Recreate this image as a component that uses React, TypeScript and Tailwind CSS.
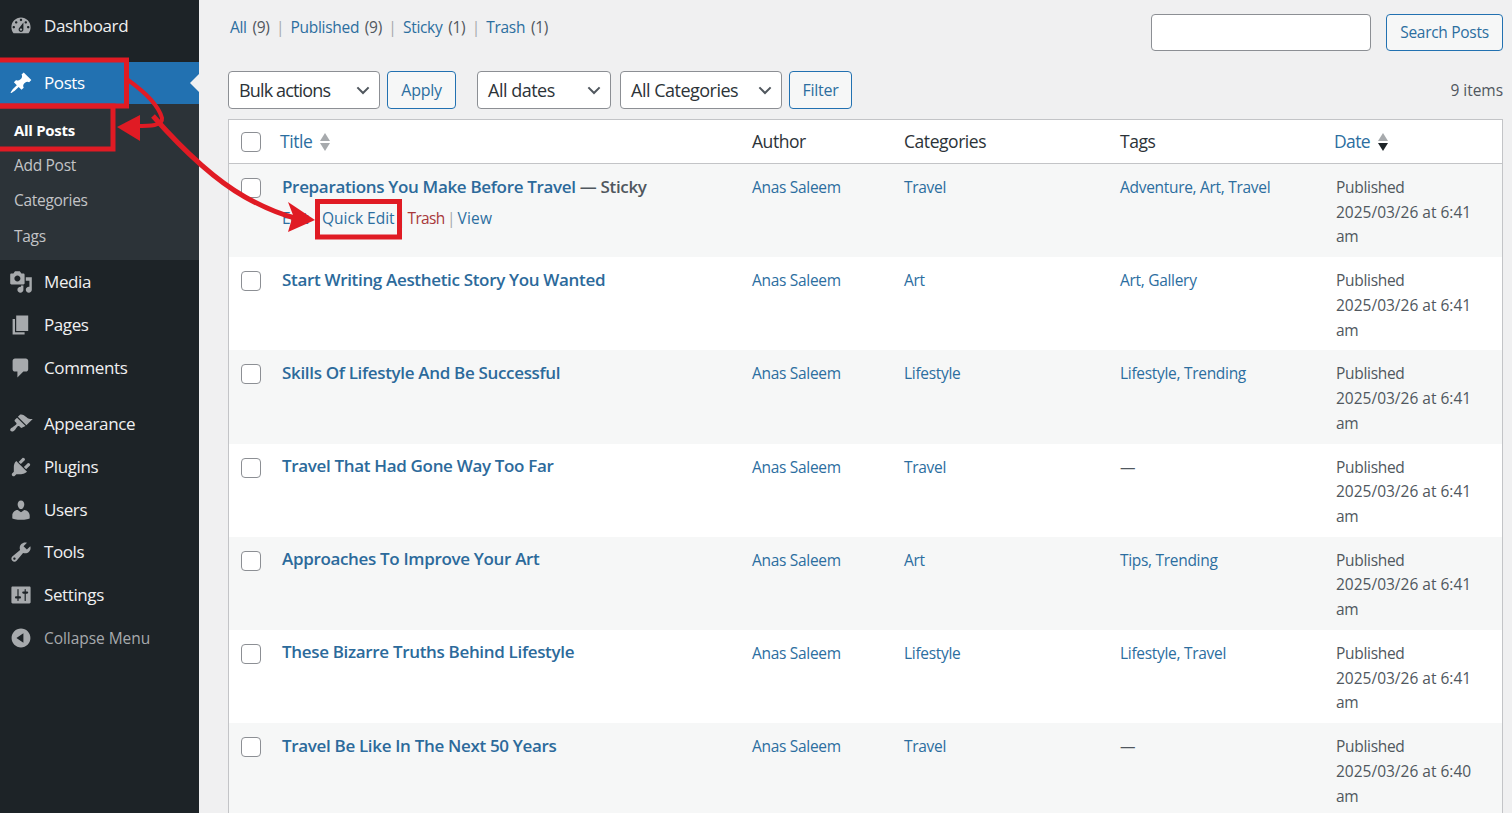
const font = "font-['Open_Sans','Noto_Sans',sans-serif]";

const icons: Record<string, string> = {
  dashboard:
    "M3.76 16h12.48c1.1-1.37 1.76-3.11 1.76-5 0-4.42-3.58-8-8-8s-8 3.58-8 8c0 1.89.66 3.63 1.76 5zM10 4c.55 0 1 .45 1 1s-.45 1-1 1-1-.45-1-1 .45-1 1-1zM6 6c.55 0 1 .45 1 1s-.45 1-1 1-1-.45-1-1 .45-1 1-1zm8 0c.55 0 1 .45 1 1s-.45 1-1 1-1-.45-1-1 .45-1 1-1zm-5.37 5.55L12 7v6c0 1.1-.9 2-2 2s-2-.9-2-2c0-.57.24-1.08.63-1.45zM4 10c.55 0 1 .45 1 1s-.45 1-1 1-1-.45-1-1 .45-1 1-1zm12 0c.55 0 1 .45 1 1s-.45 1-1 1-1-.45-1-1 .45-1 1-1zm-5 3c0-.55-.45-1-1-1s-1 .45-1 1 .45 1 1 1 1-.45 1-1z",
  post: "M10.44 3.02l1.82-1.82 6.36 6.35-1.83 1.82c-1.05-.68-2.48-.57-3.41.36l-.75.75c-.92.93-1.04 2.35-.35 3.41l-1.83 1.82-2.41-2.41-2.8 2.79c-.42.42-3.38 2.71-3.8 2.29s1.86-3.39 2.28-3.81l2.79-2.79L4.1 9.36l1.83-1.82c1.05.69 2.48.57 3.4-.36l.75-.75c.93-.92 1.05-2.35.36-3.41z",
  media:
    "M13 11V4c0-.55-.45-1-1-1h-1.67L9 1H5L3.67 3H2c-.55 0-1 .45-1 1v7c0 .55.45 1 1 1h10c.55 0 1-.45 1-1zM7 4.5c1.38 0 2.5 1.12 2.5 2.5S8.38 9.5 7 9.5 4.5 8.38 4.5 7 5.62 4.5 7 4.5zM14 6h5v10.5c0 1.38-1.12 2.5-2.5 2.5S14 17.88 14 16.5s1.12-2.5 2.5-2.5c.17 0 .34.02.5.05V9h-3V6zm-4 8.05V13h2v3.5c0 1.38-1.12 2.5-2.5 2.5S7 17.88 7 16.5 8.12 14 9.5 14c.17 0 .34.02.5.05z",
  pages: "M6 15V2h10v13H6zm-1 1h8v2H3V5h2v11z",
  comments: "M5 2h9c1.1 0 2 .9 2 2v7c0 1.1-.9 2-2 2h-2l-5 5v-5H5c-1.1 0-2-.9-2-2V4c0-1.1.9-2 2-2z",
  appearance:
    "M14.48 11.06L7.41 3.99l1.5-1.5c.5-.56 2.3-.47 3.51.32 1.21.8 1.43 1.28 2.91 2.1 1.18.64 2.45 1.26 4.45.85zm-.71.71L6.7 4.7 4.93 6.47c-.39.39-.39 1.02 0 1.41l1.06 1.06c.39.39.39 1.03 0 1.42-.6.6-1.43 1.11-2.21 1.69-.35.26-.7.53-1.01.84C1.43 13.23.4 14.85 1.46 15.91c.95.95 2.48 0 3.23-.75.31-.31.58-.66.84-1.01.58-.78 1.09-1.61 1.69-2.21.39-.39 1.02-.39 1.41 0l1.06 1.06c.39.39 1.03.39 1.42 0z",
  plugins:
    "M13.11 4.36L9.87 7.6 8 5.73l3.24-3.24c.35-.34 1.05-.2 1.56.32.52.51.66 1.21.31 1.55zm-8 1.77l.91-1.12 9.01 9.01-1.19.84c-.71.71-2.63 1.16-3.82 1.16H6.14L4.9 17.26c-.59.59-1.54.59-2.12 0-.59-.58-.59-1.53 0-2.12l1.24-1.24v-3.88c0-1.13.4-3.19 1.09-3.89zm7.26 3.97l3.24-3.24c.34-.35 1.04-.21 1.55.31.52.51.66 1.21.31 1.55l-3.24 3.25z",
  users:
    "M10 9.25c-2.27 0-2.73-3.44-2.73-3.44C7 4.02 7.82 2 9.97 2c2.16 0 2.98 2.02 2.71 3.81 0 0-.41 3.44-2.68 3.44zm0 2.57L12.72 10c2.39 0 4.52 2.33 4.52 4.53v2.49s-3.65 1.13-7.24 1.13c-3.65 0-7.24-1.13-7.24-1.13v-2.49c0-2.25 1.94-4.48 4.47-4.48z",
  tools:
    "M16.68 9.77c-1.34 1.34-3.3 1.67-4.95.99l-5.41 6.52c-.99.99-2.59.99-3.58 0s-.99-2.59 0-3.57l6.52-5.42c-.68-1.65-.35-3.61.99-4.95 1.28-1.28 3.12-1.62 4.72-1.06l-2.89 2.89 2.82 2.82 2.86-2.87c.53 1.58.18 3.39-1.08 4.65zM3.81 16.21c.4.39 1.04.39 1.43 0 .4-.4.4-1.04 0-1.43-.39-.4-1.03-.4-1.43 0-.39.39-.39 1.03 0 1.43z",
  settings:
    "M18 16V4c0-.55-.45-1-1-1H3c-.55 0-1 .45-1 1v12c0 .55.45 1 1 1h14c.55 0 1-.45 1-1zM8 11h1c.55 0 1 .45 1 1s-.45 1-1 1H8v1.5c0 .28-.22.5-.5.5s-.5-.22-.5-.5V13H6c-.55 0-1-.45-1-1s.45-1 1-1h1V5.5c0-.28.22-.5.5-.5s.5.22.5.5V11zm5-2h-1c-.55 0-1-.45-1-1s.45-1 1-1h1V5.5c0-.28.22-.5.5-.5s.5.22.5.5V7h1c.55 0 1 .45 1 1s-.45 1-1 1h-1v5.5c0 .28-.22.5-.5.5s-.5-.22-.5-.5V9z",
  collapse: "M10 2.16c4.33 0 7.84 3.51 7.84 7.84s-3.51 7.84-7.84 7.84S2.16 14.33 2.16 10 5.71 2.16 10 2.16zm2 11.72V6.12L6.18 9.97z",
};

function Dashicon({ name, color = "#a7aaad" }: { name: string; color?: string }) {
  return (
    <svg viewBox="0 0 20 20" className="w-6 h-6 shrink-0" fill={color}>
      <path d={icons[name]} />
    </svg>
  );
}

function MenuItem({ icon, label, h }: { icon: string; label: string; h: string }) {
  return (
    <div className={`flex items-center pl-[9px] gap-[11px] text-[17px] tracking-[-0.4px] text-[#f0f0f1] ${h}`}>
      <Dashicon name={icon} />
      <span>{label}</span>
    </div>
  );
}

function Sidebar() {
  return (
    <div className="w-[199px] shrink-0 bg-[#1d2327] flex flex-col">
      <MenuItem icon="dashboard" label="Dashboard" h="h-[52px]" />
      <div className="mt-[10px] relative h-[42px] bg-[#2271b1] flex items-center pl-[9px] gap-[11px] text-[17px] tracking-[-0.4px] text-white">
        <Dashicon name="post" color="#ffffff" />
        <span>Posts</span>
        <div className="absolute right-0 top-[12px] border-y-[9px] border-r-[9px] border-y-transparent border-r-[#f0f0f1]" />
      </div>
      <div className="bg-[#2c3338] h-[156px] pt-[8px] text-[15.5px] tracking-[-0.3px] text-[#c3c4c7] pl-[14px]">
        <div className="h-[35.5px] flex items-center font-bold text-white tracking-[-0.3px] text-[15px]">All Posts</div>
        <div className="h-[35.5px] flex items-center">Add Post</div>
        <div className="h-[35.5px] flex items-center">Categories</div>
        <div className="h-[35.5px] flex items-center">Tags</div>
      </div>
      <MenuItem icon="media" label="Media" h="h-[43px]" />
      <MenuItem icon="pages" label="Pages" h="h-[43px]" />
      <MenuItem icon="comments" label="Comments" h="h-[43px]" />
      <div className="h-[13px]" />
      <MenuItem icon="appearance" label="Appearance" h="h-[43px]" />
      <MenuItem icon="plugins" label="Plugins" h="h-[43px]" />
      <MenuItem icon="users" label="Users" h="h-[43px]" />
      <MenuItem icon="tools" label="Tools" h="h-[42px]" />
      <MenuItem icon="settings" label="Settings" h="h-[43px]" />
      <div className="h-[44px] flex items-center pl-[9px] gap-[11px] text-[15.5px] tracking-[-0.05px] text-[#a7aaad]">
        <Dashicon name="collapse" />
        <span className="pt-[1px]">Collapse Menu</span>
      </div>
    </div>
  );
}

function Select({ label, w, track = "tracking-[-0.5px]" }: { label: string; w: string; track?: string }) {
  return (
    <div className={`h-[38px] ${w} ${track} bg-white border border-[#8c8f94] rounded-[4px] flex items-center justify-between pl-[10px] pr-[9px] text-[18px] text-[#2c3338]`}>
      <span>{label}</span>
      <svg viewBox="0 0 12 8" className="w-[14px] h-[9px]" fill="none" stroke="#50575e" strokeWidth="1.8">
        <path d="M1 1.2l5 5 5-5" />
      </svg>
    </div>
  );
}

function Btn({ label, w }: { label: string; w: string }) {
  return (
    <div className={`h-[38px] ${w} bg-[#f6f7f7] border border-[#2271b1] rounded-[4px] flex items-center justify-center text-[16px] tracking-[-0.3px] text-[#2c6e9f]`}>
      {label}
    </div>
  );
}

function Checkbox() {
  return <div className="w-[20px] h-[20px] bg-white border border-[#8c8f94] rounded-[4px]" />;
}

function Sort({ active }: { active?: boolean }) {
  return (
    <span className="inline-flex flex-col gap-[2px] ml-[8px]">
      <span className="w-0 h-0 border-x-[5.5px] border-x-transparent border-b-[8px] border-b-[#a7aaad]" />
      <span className={`w-0 h-0 border-x-[5.5px] border-x-transparent border-t-[8px] ${active ? "border-t-[#1d2327]" : "border-t-[#a7aaad]"}`} />
    </span>
  );
}

const cols = "grid grid-cols-[53px_470px_152px_216px_214px_1fr]";

const posts = [
  { title: "Preparations You Make Before Travel", sticky: true, cat: "Travel", tags: "Adventure, Art, Travel", time: "6:41" },
  { title: "Start Writing Aesthetic Story You Wanted", cat: "Art", tags: "Art, Gallery", time: "6:41" },
  { title: "Skills Of Lifestyle And Be Successful", cat: "Lifestyle", tags: "Lifestyle, Trending", time: "6:41" },
  { title: "Travel That Had Gone Way Too Far", cat: "Travel", tags: "—", time: "6:41" },
  { title: "Approaches To Improve Your Art", cat: "Art", tags: "Tips, Trending", time: "6:41" },
  { title: "These Bizarre Truths Behind Lifestyle", cat: "Lifestyle", tags: "Lifestyle, Travel", time: "6:41" },
  { title: "Travel Be Like In The Next 50 Years", cat: "Travel", tags: "—", time: "6:40" },
];

function Sep({ w }: { w: string }) {
  return <span className={`${w} text-center text-[#a7aaad]`}>|</span>;
}

function Row({ post, odd }: { post: (typeof posts)[number]; odd: boolean }) {
  return (
    <div className={`${cols} h-[93.2px] pt-[11px] text-[15.5px] tracking-[-0.3px] leading-[24.7px] text-[#50575e] ${odd ? "bg-[#f6f7f7]" : "bg-white"}`}>
      <div className="pl-[12px] pt-[3px]">
        <Checkbox />
      </div>
      <div className="-mt-[0.5px]">
        <div className="text-[17px] tracking-[-0.33px] font-semibold text-[#2c6a9b] whitespace-nowrap">
          {post.title}
          {post.sticky && <span className="text-[#50575e] font-semibold"> — Sticky</span>}
        </div>
        {post.sticky && (
          <div className="mt-[6.5px] flex text-[15.5px] text-[#2c6e9f]">
            <span className="w-[40px]">Edit</span>
            <span className="tracking-[0px]">Quick Edit</span>
            <Sep w="w-[13px]" />
            <span className="text-[#a8383a] tracking-[-0.7px]">Trash</span>
            <Sep w="w-[13px]" />
            <span className="tracking-[0.2px]">View</span>
          </div>
        )}
      </div>
      <div className="text-[#2c6e9f]">Anas Saleem</div>
      <div className="text-[#2c6e9f]">{post.cat}</div>
      <div className={post.tags === "—" ? "" : "text-[#2c6e9f]"}>{post.tags}</div>
      <div className="pl-[2px]">
        Published
        <div className="tracking-[0px] whitespace-nowrap">2025/03/26 at {post.time}</div>
        am
      </div>
    </div>
  );
}

function Annotations() {
  return (
    <svg className="absolute left-0 top-0 w-[1512px] h-[813px] pointer-events-none" viewBox="0 0 1512 813" fill="none">
      <g stroke="#e01b24" strokeWidth="5">
        <rect x="-5" y="60" width="131.5" height="46" />
        <rect x="-5" y="106" width="118" height="43" />
        <rect x="317.5" y="201.5" width="82" height="35.5" />
        <path d="M128 80c14 10 30 24 34 38 1 8-12 8-26 8" strokeWidth="4" />
        <path d="M153 116c30 34 62 64 92 81 18 10 34 17 50 21" strokeWidth="5" />
      </g>
      <g fill="#e01b24">
        <path d="M117 127l23-12v26z" />
        <path d="M315 220l-27-18 5 13-5 17z" />
      </g>
    </svg>
  );
}

export default function App() {
  return (
    <div className={`relative w-[1512px] h-[813px] overflow-hidden flex bg-[#f0f0f1] ${font}`}>
      <Sidebar />
      <div className="flex-1 pl-[29px] pr-[9px]">
        <div className="h-[71px] flex items-start justify-between">
          <div className="pt-[16px] pl-[2px] flex text-[15.5px] tracking-[-0.3px] [word-spacing:2px] text-[#50575e]">
            <span><span className="text-[#2c6e9f]">All</span> (9)</span>
            <Sep w="w-[21px]" />
            <span><span className="text-[#2c6e9f]">Published</span> (9)</span>
            <Sep w="w-[21px]" />
            <span><span className="text-[#2c6e9f]">Sticky</span> (1)</span>
            <Sep w="w-[21px]" />
            <span><span className="text-[#2c6e9f]">Trash</span> (1)</span>
          </div>
          <div className="flex gap-[15px] pt-[14px]">
            <div className="w-[220px] h-[37px] bg-white border border-[#8c8f94] rounded-[4px]" />
            <div className="w-[117px] h-[37px] pt-[1px] bg-[#f6f7f7] border border-[#2271b1] rounded-[4px] flex items-center justify-center text-[15.5px] tracking-[-0.3px] text-[#2c6e9f]">
              Search Posts
            </div>
          </div>
        </div>
        <div className="h-[48px] flex items-start">
          <Select label="Bulk actions" w="w-[152px]" track="tracking-[-0.85px]" />
          <div className="ml-[7px]">
            <Btn label="Apply" w="w-[69px]" />
          </div>
          <div className="ml-[21px]">
            <Select label="All dates" w="w-[134px]" />
          </div>
          <div className="ml-[9px]">
            <Select label="All Categories" w="w-[162px]" />
          </div>
          <div className="ml-[7px]">
            <Btn label="Filter" w="w-[63px]" />
          </div>
          <div className="ml-auto pt-[8px] text-[15.5px] tracking-[-0.05px] text-[#50575e]">9 items</div>
        </div>
        <div className="border border-[#c3c4c7] border-b-0">
          <div className={`${cols} h-[44px] items-center bg-white border-b border-[#c3c4c7] text-[17.5px] tracking-[-0.45px] text-[#2c3338]`}>
            <div className="pl-[12px]">
              <Checkbox />
            </div>
            <div className="-ml-[2px] flex items-center text-[#2c6e9f]">
              Title
              <Sort />
            </div>
            <div>Author</div>
            <div>Categories</div>
            <div>Tags</div>
            <div className="flex items-center tracking-[-0.6px] text-[#2c6e9f]">
              Date
              <Sort active />
            </div>
          </div>
          {posts.map((post, i) => (
            <Row key={post.title} post={post} odd={i % 2 === 0} />
          ))}
        </div>
      </div>
      <Annotations />
    </div>
  );
}
